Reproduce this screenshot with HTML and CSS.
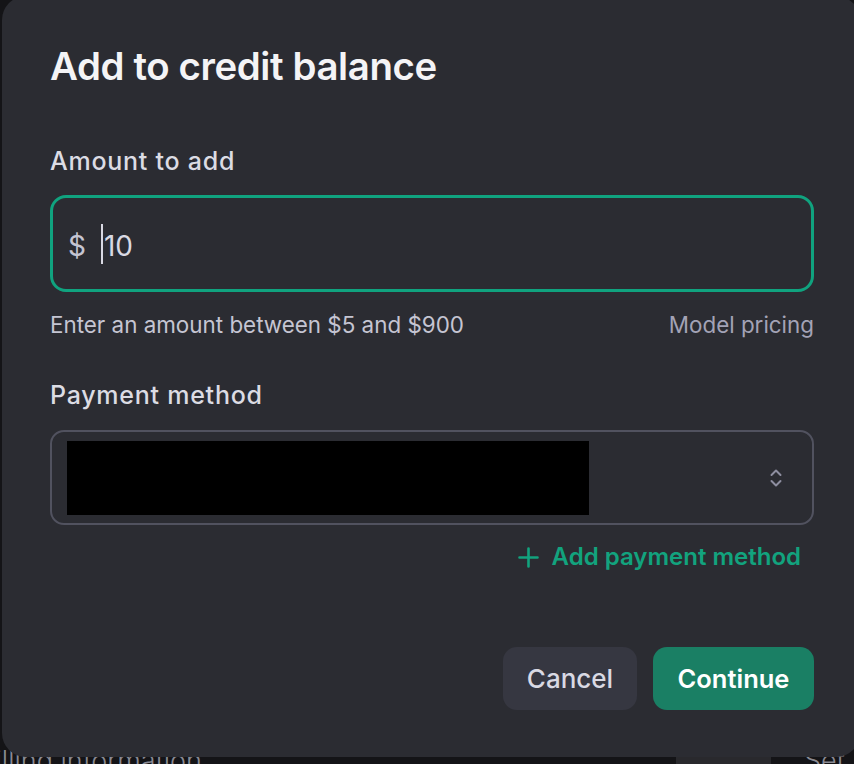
FILE: index.html
```html
<!DOCTYPE html>
<html lang="en">
<head>
  <meta charset="UTF-8">
  <title>Add to credit balance</title>
  <meta name="viewport" content="width=device-width,initial-scale=1">
  <link rel="stylesheet" href="styles.css">
</head>
<body>
<div class="backdrop">
  <span class="bg-text">Billing information</span>
  <span class="bg-box"></span>
  <span class="bg-text bg-set">Set</span>
</div>

<div class="modal" role="dialog" aria-labelledby="modal-title">
  <h1 id="modal-title">Add to credit balance</h1>

  <label class="field-label">Amount to add</label>
  <div class="amount-input">
    <span class="currency">$</span>
    <span class="caret"></span>
    <span class="amount">10</span>
  </div>
  <div class="hint-row">
    <span class="hint">Enter an amount between $5 and $900</span>
    <a class="hint-link" href="#">Model pricing</a>
  </div>

  <label class="field-label payment-label">Payment method</label>
  <div class="select">
    <span class="redacted"></span>
    <svg class="chevrons" width="12" height="18" viewBox="0 0 12 18" fill="none" stroke="currentColor" stroke-width="2" stroke-linecap="round" stroke-linejoin="round">
      <path d="M1.5 6 L6 1.5 L10.5 6"/>
      <path d="M1.5 12 L6 16.5 L10.5 12"/>
    </svg>
  </div>
  <div class="add-row">
    <a class="add-method" href="#">
      <svg width="21" height="21" viewBox="0 0 21 21" stroke="currentColor" stroke-width="2.6" stroke-linecap="round">
        <path d="M10.5 1.5 V19.5 M1.5 10.5 H19.5"/>
      </svg>
      Add payment method
    </a>
  </div>

  <div class="actions">
    <button class="btn btn-cancel">Cancel</button>
    <button class="btn btn-continue">Continue</button>
  </div>
</div>
</body>
</html>
```

FILE: styles.css
```css
html, body {
  margin: 0;
  height: 764px;
  overflow: hidden;
}
body {
  font-family: Inter, "Noto Sans", Arial, sans-serif;
  background: #141417;
  color: #ececf1;
  position: relative;
}
.backdrop {
  display: flex;
  align-items: flex-start;
  padding-top: 744px;
  margin-left: -22px;
}
.bg-text {
  font-size: 27px;
  color: #8a8a93;
  font-weight: 300;
}
.bg-box {
  width: 95px;
  height: 40px;
  margin-left: 474px;
  background: #29292d;
  margin-top: 12px;
}
.bg-set {
  margin-left: 33px;
}
.modal {
  position: absolute;
  left: 2px;
  top: -4px;
  width: 858px;
  height: 761px;
  box-sizing: border-box;
  padding: 47px 44px 0 48px;
  background: #2b2c32;
  border-radius: 24px;
  display: flex;
  flex-direction: column;
}
.modal > * {
  width: 764px;
}
h1 {
  margin: 0;
  font-size: 38.4px;
  line-height: 46px;
  font-weight: 600;
  letter-spacing: -0.01em;
  color: #f4f4f6;
}
.field-label {
  display: block;
  margin-top: 57px;
  font-size: 25px;
  line-height: 30px;
  font-weight: 500;
  letter-spacing: 0.03em;
  color: #dcdce4;
}
.amount-input {
  margin-top: 19px;
  height: 97px;
  box-sizing: border-box;
  border: 3px solid #10a37f;
  border-radius: 16px;
  display: flex;
  align-items: center;
  padding: 4px 0 0 15px;
  font-size: 28px;
}
.currency {
  color: #c5c5d2;
}
.caret {
  width: 2px;
  height: 40px;
  background: #d9d9e3;
  margin: -3px 0 0 15px;
}
.amount {
  color: #d9d9e3;
  margin-left: 1px;
}
.hint-row {
  margin-top: 18px;
  display: flex;
  justify-content: space-between;
  font-size: 22.4px;
  line-height: 30px;
}
.hint {
  color: #c5c5d2;
}
.hint-link {
  color: #a3a3b6;
  text-decoration: none;
}
.payment-label {
  margin-top: 40px;
}
.select {
  margin-top: 20px;
  height: 95px;
  box-sizing: border-box;
  border: 2px solid #51525f;
  border-radius: 14px;
  display: flex;
  align-items: center;
  justify-content: space-between;
  padding: 0 30px 0 15px;
}
.redacted {
  width: 522px;
  height: 74px;
  background: #000;
}
.chevrons {
  color: #8e8ea0;
}
.add-row {
  margin-top: 16px;
  display: flex;
  justify-content: flex-end;
}
.add-method {
  display: flex;
  align-items: center;
  gap: 13px;
  padding-right: 13px;
  font-size: 24px;
  line-height: 32px;
  font-weight: 600;
  color: #12a37e;
  text-decoration: none;
}
.actions {
  margin-top: 74px;
  display: flex;
  justify-content: flex-end;
  gap: 16px;
}
.btn {
  height: 63px;
  border: none;
  border-radius: 14px;
  font-family: inherit;
  font-size: 26px;
  font-weight: 500;
  padding: 0;
}
.btn-cancel {
  width: 134px;
  background: #363741;
  color: #d9d9e3;
}
.btn-continue {
  width: 161px;
  background: #1a7f64;
  color: #fff;
  font-size: 25.5px;
  font-weight: 600;
}
```
